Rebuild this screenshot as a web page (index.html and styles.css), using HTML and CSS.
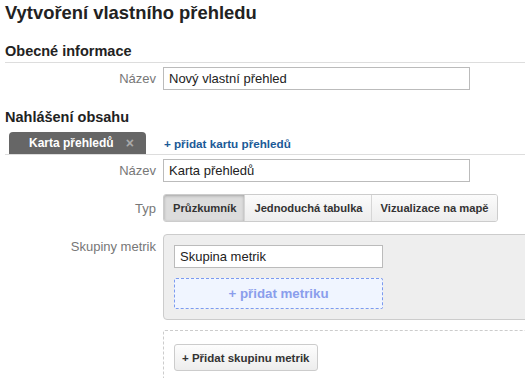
FILE: index.html
```html
<!DOCTYPE html>
<html lang="cs">
<head>
<meta charset="utf-8">
<title>Vytvoření vlastního přehledu</title>
<link rel="stylesheet" href="styles.css">
</head>
<body>
<div class="page">
  <h1 class="title">Vytvoření vlastního přehledu</h1>

  <h2 class="section">Obecné informace</h2>
  <div class="row row-top">
    <div class="label">Název</div>
    <input class="text text-wide" type="text" value="Nový vlastní přehled">
  </div>

  <h2 class="section section-plain">Nahlášení obsahu</h2>
  <div class="tabs">
    <div class="tab"><span class="tab-name">Karta přehledů</span><span class="tab-close">×</span></div>
    <a class="add-tab" href="#">+ přidat kartu přehledů</a>
  </div>

  <div class="row row-top">
    <div class="label">Název</div>
    <input class="text text-wide" type="text" value="Karta přehledů">
  </div>

  <div class="row row-type">
    <div class="label">Typ</div>
    <div class="btn-group">
      <span class="seg seg-active">Průzkumník</span>
      <span class="seg">Jednoduchá tabulka</span>
      <span class="seg">Vizualizace na mapě</span>
    </div>
  </div>

  <div class="row row-groups">
    <div class="label label-top">Skupiny metrik</div>
    <div class="groups">
      <div class="panel">
        <input class="text text-group" type="text" value="Skupina metrik">
        <div class="add-metric">+ přidat metriku</div>
      </div>
      <div class="add-area">
        <span class="btn">+ Přidat skupinu metrik</span>
      </div>
    </div>
  </div>
</div>
</body>
</html>
```

FILE: styles.css
```css
html, body {
  margin: 0;
  padding: 0;
  overflow: hidden;
  background: #fff;
}

body {
  font-family: "Liberation Sans", Arial, sans-serif;
  color: #222;
}

.page {
  width: 720px;
  padding-left: 5px;
}

.title {
  margin: 2px 0 0;
  font-size: 18.4px;
  line-height: 22px;
  font-weight: bold;
  color: #222;
}

.section {
  margin: 18px 0 0;
  padding-bottom: 2px;
  border-bottom: 1px solid #ddd;
  font-size: 14.5px;
  line-height: 18px;
  font-weight: bold;
  color: #222;
}

.section-plain {
  border-bottom: none;
  padding-bottom: 0;
}

.row {
  display: flex;
  align-items: center;
  gap: 7px;
}

.row-top {
  margin-top: 4px;
}

.row-type {
  margin-top: 12px;
}

.row-groups {
  margin-top: 12px;
  align-items: flex-start;
}

.label {
  width: 151px;
  flex: none;
  text-align: right;
  font-size: 13px;
  line-height: 15px;
  color: #777;
}

.label-top {
  margin-top: 5px;
}

.text {
  box-sizing: border-box;
  height: 23px;
  margin: 0;
  padding: 0 5px;
  border: 1px solid #bbb;
  border-radius: 0;
  background: #fff;
  font-family: "Liberation Sans", Arial, sans-serif;
  font-size: 13px;
  color: #222;
  outline: none;
}

.text-wide {
  width: 307px;
}

.text-group {
  display: block;
  width: 209px;
}

.tabs {
  display: flex;
  align-items: flex-end;
  margin-top: 6px;
  border-bottom: 1px solid #ddd;
}

.tab {
  display: flex;
  align-items: center;
  height: 22px;
  margin-left: 4px;
  padding: 0 12px 0 20px;
  background: #666;
  border-radius: 4px 4px 0 0;
  color: #fff;
  font-size: 12px;
  font-weight: bold;
}

.tab-close {
  margin-left: 12px;
  color: #aaa;
  font-size: 14px;
  font-weight: bold;
}

.add-tab {
  align-self: center;
  margin-left: 18px;
  color: #1b5a97;
  font-size: 11.7px;
  font-weight: bold;
  text-decoration: none;
}

.btn-group {
  display: flex;
  height: 28px;
  box-sizing: border-box;
  border: 1px solid #ccc;
  border-radius: 3px;
  overflow: hidden;
}

.seg {
  display: flex;
  align-items: center;
  padding: 0 8px 0 9px;
  background: linear-gradient(#fbfbfb, #ededed);
  border-left: 1px solid #d6d6d6;
  font-size: 11.2px;
  font-weight: bold;
  color: #333;
}

.seg:first-child {
  border-left: none;
}

.seg-active {
  background: #dcdcdc;
  box-shadow: inset 0 1px 3px rgba(0, 0, 0, 0.25);
}

.groups {
  display: flex;
  flex-direction: column;
  width: 420px;
}

.panel {
  padding: 10px;
  background: #eee;
  border: 1px solid #ccc;
  border-radius: 4px;
}

.add-metric {
  width: 209px;
  box-sizing: border-box;
  height: 31px;
  margin-top: 10px;
  display: flex;
  align-items: center;
  justify-content: center;
  background: #f0f5ff;
  border: 1px dashed #7c9bef;
  border-radius: 2px;
  color: #8a9eec;
  font-size: 13.3px;
  font-weight: bold;
}

.add-area {
  margin-top: 10px;
  padding: 13px 10px 20px;
  border: 1px dashed #ccc;
  border-radius: 2px;
}

.btn {
  display: inline-flex;
  align-items: center;
  height: 27px;
  box-sizing: border-box;
  padding: 0 7px;
  border: 1px solid #ccc;
  border-radius: 3px;
  background: linear-gradient(#fdfdfd, #ededed);
  font-size: 11.5px;
  font-weight: bold;
  color: #333;
}
```
